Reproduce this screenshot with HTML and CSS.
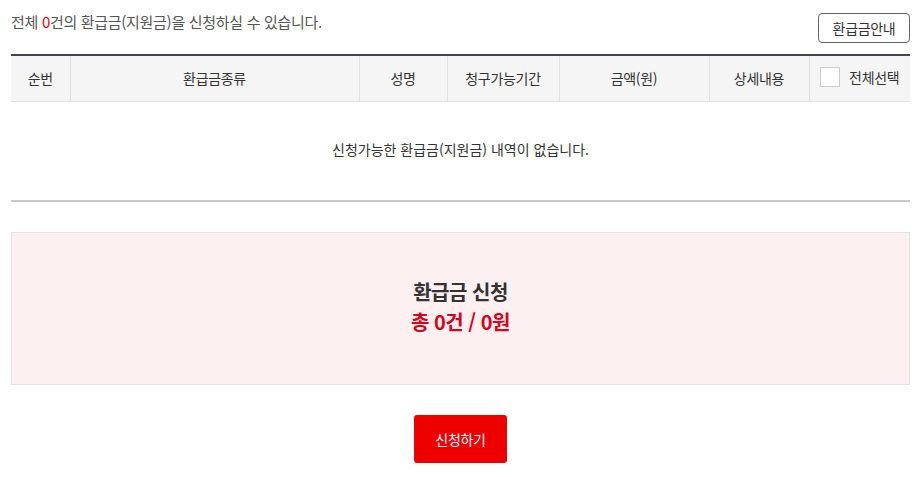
FILE: index.html
```html
<!DOCTYPE html>
<html lang="ko">
<head>
<meta charset="utf-8">
<link rel="stylesheet" href="styles.css">
</head>
<body>
<div class="wrap">
  <div class="top">
    <p class="summary">전체 <span class="red">0</span>건의 환급금(지원금)을 신청하실 수 있습니다.</p>
    <button class="guide">환급금안내</button>
  </div>
  <table class="list">
    <colgroup>
      <col class="c1"><col class="c2"><col class="c3"><col class="c4"><col class="c5"><col class="c6"><col>
    </colgroup>
    <thead>
      <tr>
        <th>순번</th><th>환급금종류</th><th>성명</th><th>청구가능기간</th><th>금액(원)</th><th>상세내용</th>
        <th><span class="chk"><span class="box"></span>전체선택</span></th>
      </tr>
    </thead>
    <tbody>
      <tr><td colspan="7" class="empty">신청가능한 환급금(지원금) 내역이 없습니다.</td></tr>
    </tbody>
  </table>
  <div class="total">
    <div class="t1">환급금 신청</div>
    <div class="t2">총 0건 / 0원</div>
  </div>
  <div class="actions"><button class="apply">신청하기</button></div>
</div>
</body>
</html>
```
FILE: styles.css
```css
* { box-sizing: border-box; }
html, body { margin: 0; padding: 0; background: #fff; }
body { font-family: "Noto Sans CJK KR", "Noto Sans", sans-serif; color: #333; }
.wrap { padding: 0 14px 0 11px; }
.top { display: flex; justify-content: space-between; align-items: flex-start; height: 54px; }
.summary { margin: 11px 0 0; font-size: 15px; color: #555; letter-spacing: -0.3px; line-height: 22px; }
.red { color: #e60012; }
.guide { margin-top: 13px; height: 30px; width: 92px; padding: 0; border: 1px solid #666; border-radius: 4px; background: #fff; font-family: inherit; font-size: 14px; color: #333; letter-spacing: -0.3px; }
.list { width: 100%; border-collapse: collapse; table-layout: fixed; border-top: 2px solid #44455a; }
.c1 { width: 59px; }
.c2 { width: 289px; }
.c3 { width: 88px; }
.c4 { width: 112px; }
.c5 { width: 150px; }
.c6 { width: 100px; }
.list th { height: 46px; background: #f5f5f5; font-weight: normal; font-size: 14px; color: #333; border-bottom: 1px solid #e2e2e2; border-left: 1px solid #e2e2e2; padding: 0; letter-spacing: -0.3px; }
.list th:first-child { border-left: 0; }
.chk { display: inline-flex; align-items: center; gap: 9px; padding-top: 2px; }
.box { width: 20px; height: 20px; border: 1px solid #ccc; background: #fff; }
.empty { height: 100px; text-align: center; font-size: 14px; color: #333; border-bottom: 2px solid #c9c9cc; padding: 0 0 4px; }
.total { margin-top: 30px; height: 153px; background: #fdf0f1; border: 1px solid #e3e3e6; display: flex; flex-direction: column; align-items: center; justify-content: center; padding-bottom: 4px; }
.t1 { font-size: 20px; font-weight: bold; color: #333; line-height: 30px; letter-spacing: -0.5px; }
.t2 { font-size: 20px; font-weight: bold; color: #d8001a; line-height: 30px; letter-spacing: -0.5px; }
.actions { display: flex; justify-content: center; padding-top: 30px; }
.apply { width: 93px; height: 48px; background: #ee0000; color: #fff; border: 0; border-radius: 3px; font-family: inherit; font-size: 14px; letter-spacing: -0.3px; }
```
